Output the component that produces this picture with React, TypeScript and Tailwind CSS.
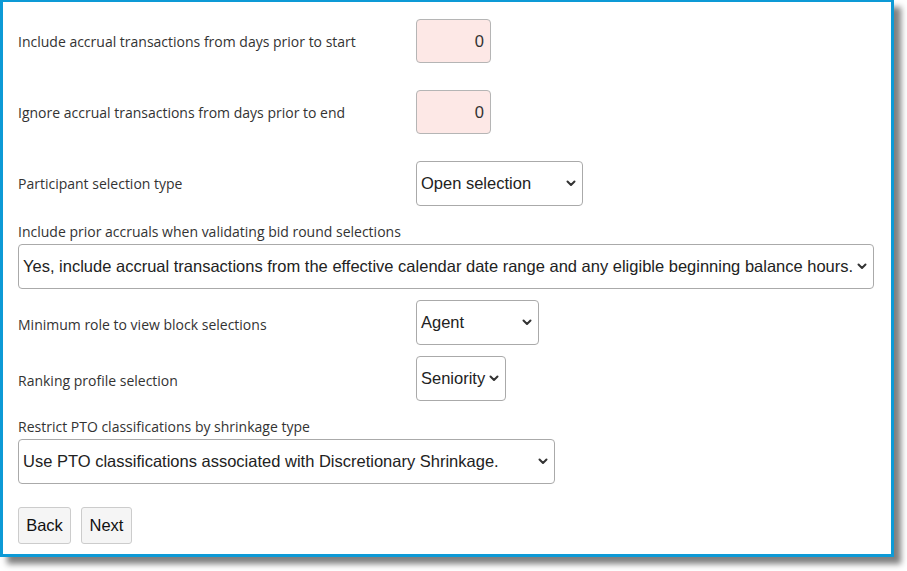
import React from "react";

const labelFont = { fontFamily: '"Open Sans", "Noto Sans", sans-serif' };

function Chevron() {
  return (
    <svg width="10" height="7" viewBox="0 0 10 7" className="shrink-0">
      <path d="M1.5 1.5 L5 5 L8.5 1.5" fill="none" stroke="#333" strokeWidth="2" strokeLinecap="round" strokeLinejoin="round" />
    </svg>
  );
}

function Select({ text, w, full }: { text: string; w?: string; full?: boolean }) {
  return (
    <div
      className={`h-[45px] flex items-center justify-between pl-[4px] pr-[6px] border border-[#aaaaaa] rounded-[4px] bg-white text-[16.5px] text-[#222] font-['Liberation_Sans',Arial,sans-serif] ${full ? "w-[856px]" : w}`}
    >
      <span className="whitespace-nowrap">{text}</span>
      <Chevron />
    </div>
  );
}

function NumInput() {
  return (
    <div className="w-[75px] h-[44px] flex items-center justify-end pr-[6px] border border-[#b5b5b5] rounded-[4px] bg-[#fde8e6] text-[16.5px] text-[#333] font-['Liberation_Sans',Arial,sans-serif]">
      0
    </div>
  );
}

function Row({ label, children, className, labelClass }: { label: string; children: React.ReactNode; className?: string; labelClass?: string }) {
  return (
    <div className={`flex items-center ${className ?? ""}`}>
      <div className={`w-[398px] text-[14px] text-[#333] ${labelClass ?? ""}`} style={labelFont}>
        {label}
      </div>
      {children}
    </div>
  );
}

export default function App() {
  return (
    <div className="w-[907px] h-[571px] bg-white">
      <div className="w-[894px] h-[557px] border-[3px] border-t-2 border-[#0d9ad6] bg-white shadow-[7px_7px_6px_rgba(0,0,0,0.5)] pl-[15px] pt-[17px]">
        <Row label="Include accrual transactions from days prior to start">
          <NumInput />
        </Row>
        <Row label="Ignore accrual transactions from days prior to end" className="mt-[27px]">
          <NumInput />
        </Row>
        <Row label="Participant selection type" className="mt-[27px]">
          <Select text="Open selection" w="w-[167px]" />
        </Row>
        <div className="mt-[16px] text-[14px] text-[#333] leading-[20px]" style={labelFont}>
          Include prior accruals when validating bid round selections
        </div>
        <div className="mt-[2px]">
          <Select
            full
            text="Yes, include accrual transactions from the effective calendar date range and any eligible beginning balance hours."
          />
        </div>
        <Row label="Minimum role to view block selections" className="mt-[11px]" labelClass="pt-[3px]">
          <Select text="Agent" w="w-[123px]" />
        </Row>
        <Row label="Ranking profile selection" className="mt-[11px]" labelClass="pt-[3px]">
          <Select text="Seniority" w="w-[90px]" />
        </Row>
        <div className="mt-[16px] text-[14px] text-[#333] leading-[20px]" style={labelFont}>
          Restrict PTO classifications by shrinkage type
        </div>
        <div className="mt-[2px]">
          <Select text="Use PTO classifications associated with Discretionary Shrinkage." w="w-[537px]" />
        </div>
        <div className="mt-[23px] flex gap-[10px]">
          <button className="h-[37px] w-[53px] border border-[#cccccc] rounded-[3px] bg-[#f5f5f5] text-[16.5px] text-[#111] font-['Liberation_Sans',Arial,sans-serif]">
            Back
          </button>
          <button className="h-[37px] w-[51px] border border-[#cccccc] rounded-[3px] bg-[#f5f5f5] text-[16.5px] text-[#111] font-['Liberation_Sans',Arial,sans-serif]">
            Next
          </button>
        </div>
      </div>
    </div>
  );
}
